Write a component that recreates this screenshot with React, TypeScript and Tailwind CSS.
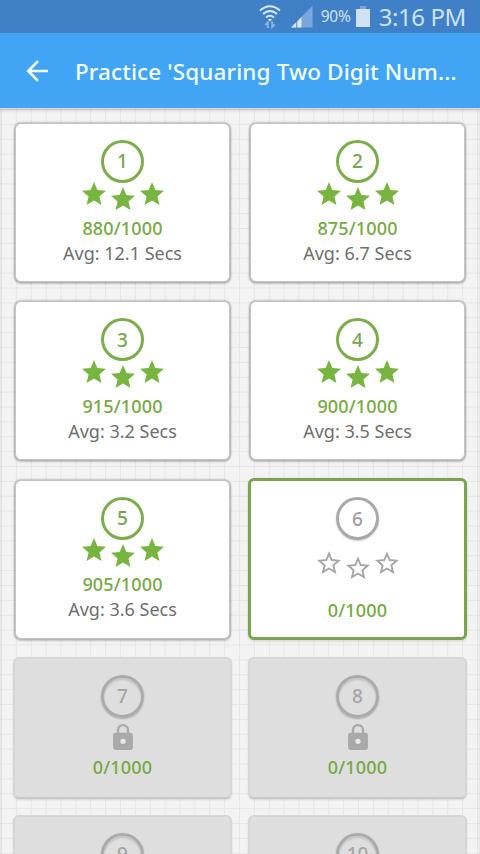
type Level = { n: number; score: number; avg?: string; state: "done" | "current" | "locked" };

const levels: Level[] = [
  { n: 1, score: 880, avg: "12.1", state: "done" },
  { n: 2, score: 875, avg: "6.7", state: "done" },
  { n: 3, score: 915, avg: "3.2", state: "done" },
  { n: 4, score: 900, avg: "3.5", state: "done" },
  { n: 5, score: 905, avg: "3.6", state: "done" },
  { n: 6, score: 0, state: "current" },
  { n: 7, score: 0, state: "locked" },
  { n: 8, score: 0, state: "locked" },
  { n: 9, score: 0, state: "locked" },
  { n: 10, score: 0, state: "locked" },
];

function Star({ filled }: { filled: boolean }) {
  return (
    <svg viewBox="2 2 20 19" className="h-[23px] w-6 shrink-0">
      {filled ? (
        <path fill="#78b540" d="M12 17.27 18.18 21l-1.64-7.03L22 9.24l-7.19-.61L12 2 9.19 8.63 2 9.24l5.46 4.73L5.82 21z" />
      ) : (
        <path
          fill="none"
          stroke="#a6a6a6"
          strokeWidth="1.6"
          d="M12 16.5 17 19.5l-1.35-5.7L20 9.95l-5.75-.5L12 4.1 9.75 9.45 4 9.95l4.35 3.85L7 19.5z"
        />
      )}
    </svg>
  );
}

function Stars({ filled }: { filled: boolean }) {
  return (
    <div className="flex h-[29px] items-start gap-[5px]">
      <Star filled={filled} />
      <div className="flex pt-[5.5px]"><Star filled={filled} /></div>
      <Star filled={filled} />
    </div>
  );
}

function Lock() {
  return (
    <svg viewBox="4 1 16 21" className="mt-[6px] h-[26px] w-5">
      <path
        fill="#a9a9a9"
        fillRule="evenodd"
        d="M18 8h-1V6A5 5 0 0 0 7 6v2H6a2 2 0 0 0-2 2v10a2 2 0 0 0 2 2h12a2 2 0 0 0 2-2V10a2 2 0 0 0-2-2zM8.9 8V6a3.1 3.1 0 0 1 6.2 0v2z"
      />
      <circle cx="12" cy="15" r="2.1" fill="#e9e9e9" />
    </svg>
  );
}

const frame = {
  done: "mx-[2px] mt-[1.5px] h-[159px] border border-[#c4c4c4] bg-white pt-4 shadow-[0_0_2px_1px_rgba(0,0,0,0.16),0_1px_2px_1px_rgba(0,0,0,0.17)]",
  current: "h-[162px] border-[3px] border-[#7ba350] bg-white pt-[16px] shadow-[0_1px_3px_rgba(0,0,0,0.15)]",
  locked: "h-[142px] border-2 border-[#d6d6d6] border-b-[#c8c8c8] bg-[#dedede] pt-4 shadow-[0_1px_2px_rgba(0,0,0,0.12)]",
};

const ring = {
  done: "border-[#7bae4a] text-[#7aa54f]",
  current: "border-[#a8a8a8] text-[#a0a0a0] shadow-[0_1px_2px_rgba(0,0,0,0.2)]",
  locked: "border-[#ababab] text-[#a5a5a5] shadow-[0_1px_2px_rgba(0,0,0,0.25),inset_0_2px_2px_rgba(0,0,0,0.12)]",
};

function Card({ level }: { level: Level }) {
  const { n, score, avg, state } = level;
  return (
    <div className={`flex flex-col items-center rounded-[6px] ${frame[state]}`}>
      <div className={`flex size-[43px] shrink-0 items-center justify-center rounded-full border-3 text-[19px] font-medium ${ring[state]}`}>
        {n}
      </div>
      {state === "done" && <div className="-mt-[1.5px]"><Stars filled /></div>}
      {state === "current" && <div className="mt-[10.5px]"><Stars filled={false} /></div>}
      {state === "locked" && <Lock />}
      <div
        className={`h-[25px] text-[18px] leading-[25px] font-medium tracking-[0.15px] text-[#76a844] ${
          state === "done" ? "mt-[5px]" : state === "current" ? "mt-[18px]" : "mt-[5px]"
        }`}
      >
        {score}/1000
      </div>
      {avg && <div className="h-[25px] text-[18px] leading-[25px] text-[#6e6e6e]">Avg: {avg} Secs</div>}
    </div>
  );
}

function StatusBar() {
  return (
    <div className="flex h-[33px] items-center justify-end bg-[#4080c6] pr-[14px] text-[#cfe2f5]">
      <svg viewBox="0 0 22 24" className="mr-[10px] h-6 w-[22px]" fill="none" stroke="#d8e9f8" strokeWidth="2">
        <path d="M1 5.5Q11 -3 21 5.5M4 9Q11 3 18 9M7 12.4Q11 9 15 12.4" />
        <path d="M9 14.6q2-1.8 4 0l-2 2z" fill="#d8e9f8" stroke="none" />
        <path d="M8.8 23v-5.5l-2.5 2.5M13.2 16.5V22l2.5-2.5" stroke="#8db5df" strokeWidth="1.8" />
      </svg>
      <svg viewBox="0 0 22 22" className="mr-[8px] h-[22px] w-[22px]">
        <path d="M0 21.5 21.5 0v21.5z" fill="#79a7db" />
        <path d="M0 21.5 5 16.5v5zM6.5 21.5V15L10.5 11v10.5z" fill="#d8e9f8" />
      </svg>
      <span className="mr-[5px] text-[15.5px] tracking-[-0.2px]">90%</span>
      <svg viewBox="0 0 14 21" className="mr-[9px] h-[21px] w-[14px]">
        <path d="M4 0h6v3H4z" fill="#79a7db" />
        <path d="M0 3h14v18H0z" fill="#d0e3f6" />
      </svg>
      <span className="text-[24px] tracking-[-0.4px]">3:16 PM</span>
    </div>
  );
}

export default function App() {
  return (
    <div className="flex h-[854px] w-[480px] flex-col overflow-hidden bg-[#f3f3f3] font-['Noto_Sans','Open_Sans',sans-serif]">
      <StatusBar />
      <header className="flex h-[75px] shrink-0 items-center bg-[#42a4f5] pl-[26px] text-[#f3fcff]">
        <svg viewBox="0 0 22 22" className="mr-[27px] h-[22px] w-[22px]" fill="none" stroke="currentColor" strokeWidth="2.6">
          <path d="M22 11H2.5M12 1.2 2.2 11l9.8 9.8" />
        </svg>
        <h1 className="pt-[2px] text-[22.5px] font-medium tracking-[0.12px] whitespace-nowrap">Practice 'Squaring Two Digit Num...</h1>
      </header>
      <main className="min-h-0 flex-1 overflow-hidden bg-[linear-gradient(to_right,#e6e6e6_1px,transparent_1px),linear-gradient(to_bottom,#e6e6e6_1px,transparent_1px)] bg-[size:14.88px_14.88px] bg-[position:1px_1px] shadow-[inset_0_3px_3px_rgba(0,0,0,0.13)]">
        <div className="grid auto-rows-auto grid-cols-[219px_219px] gap-x-4 gap-y-[16.4px] pt-[13.5px] pl-[13px]">
          {levels.map((level) => (
            <div key={level.n} className={level.state === "locked" ? "h-[141.5px]" : "flow-root h-[162px]"}>
              <Card level={level} />
            </div>
          ))}
        </div>
      </main>
    </div>
  );
}
